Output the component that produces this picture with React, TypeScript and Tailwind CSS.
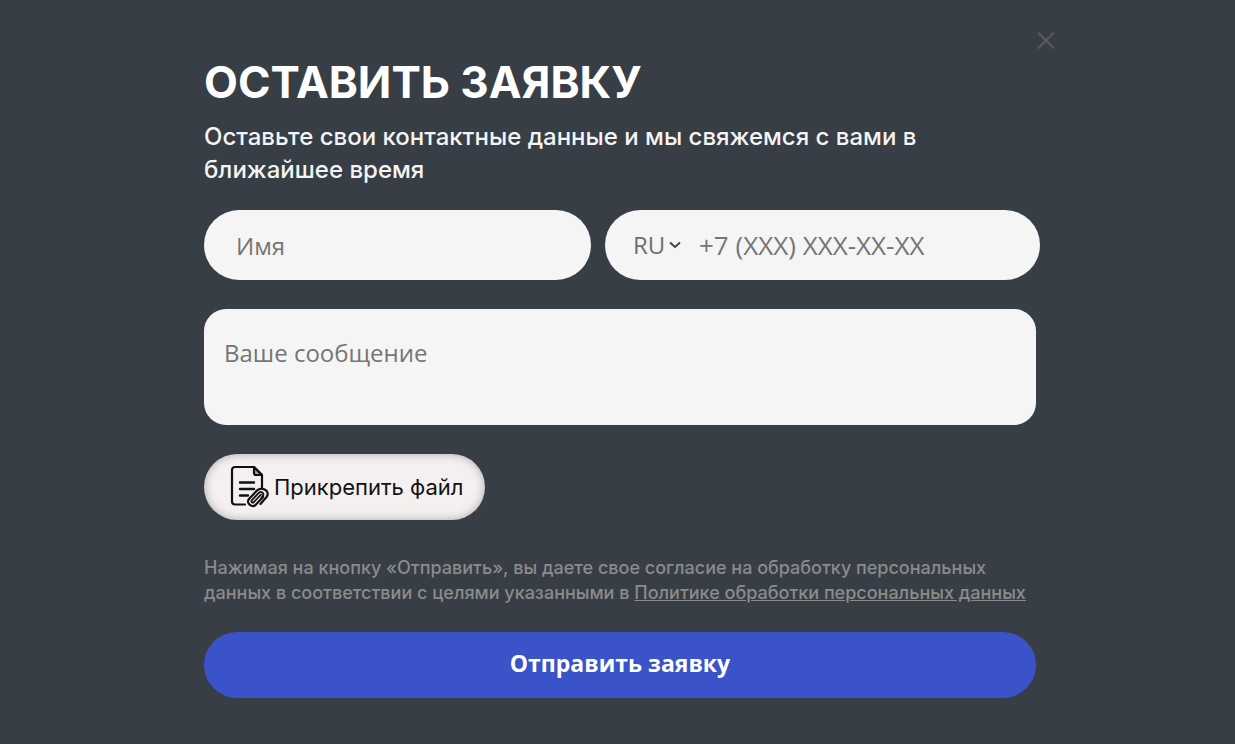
import React, { useRef, useState } from 'react';

const COUNTRIES = [
    { code: 'RU', mask: '+7 (XXX) XXX-XX-XX' },
    { code: 'BY', mask: '+375 (XX) XXX-XX-XX' },
    { code: 'KZ', mask: '+7 (XXX) XXX-XX-XX' },
];

const AttachFileIcon: React.FC = () => (
    <svg
        width="40"
        height="42"
        viewBox="0 0 40 42"
        fill="none"
        stroke="#111111"
        strokeWidth="2.2"
        strokeLinecap="round"
        strokeLinejoin="round"
        aria-hidden="true"
    >
        <path d="M15 38.500H5a3 3 0 0 1-3-3V4a3 3 0 0 1 3-3h19l8 8v14" />
        <path d="M24 1v6a2 2 0 0 0 2 2h6z" fill="#111111" fillOpacity="0.35" />
        <path d="M10 16.500h14M10 23h14M10 29.500h8" strokeWidth="2.4" />
        <path d="M33 31l-7 7.500c-3.500 4-10.500-1-7-5.500l8-8.500c4.500-4.500 14 .500 9.500 6.500l-6 7" />
        <path d="M31 28.500l-7 7.500c-1.500 1.500-3.500 0-2.200-1.700l7-7.500c2.300-2.200 5.700.200 4.200 2.900l-1.500 1.800" strokeWidth="1.8" />
    </svg>
);

const App: React.FC = () => {
    const [country, setCountry] = useState('RU');
    const fileRef = useRef<HTMLInputElement>(null);
    const mask = COUNTRIES.find((c) => c.code === country)?.mask;

    return (
        <main className="min-h-screen bg-[#383e46] px-4 pt-8 pb-11 font-['Inter',sans-serif]">
            <section role="dialog" aria-labelledby="form-title" className="mx-auto max-w-[875px]">
                <div className="flex h-5 justify-end">
                    <button type="button" aria-label="Закрыть" className="h-4 w-[18px] text-[#5b5a58]">
                        <svg width="18" height="17" viewBox="0 0 18 17" stroke="currentColor" strokeWidth="2" aria-hidden="true">
                            <path d="M1 0.500L17 16.500M17 0.500L1 16.500" />
                        </svg>
                    </button>
                </div>

                <form className="pr-[15px] pl-6" onSubmit={(e) => e.preventDefault()}>
                    <h1 id="form-title" className="text-[44px] leading-[60px] font-bold text-white">
                        ОСТАВИТЬ ЗАЯВКУ
                    </h1>
                    <p className="mt-2 text-[24px] leading-[33px] font-medium text-[#f4f4f4]">
                        Оставьте свои контактные данные и мы свяжемся с вами в<br />
                        ближайшее время
                    </p>

                    <div className="mt-6 grid grid-cols-[387fr_435fr] gap-[14px] font-['Open_Sans',sans-serif] text-[24px]">
                        <input
                            type="text"
                            name="name"
                            aria-label="Имя"
                            placeholder="Имя"
                            className="h-[70px] w-full min-w-0 rounded-full bg-[#f5f5f5] px-8 text-[#333333] outline-none placeholder:text-[#757575]"
                        />
                        <div className="flex h-[70px] min-w-0 items-center rounded-full bg-[#f5f5f5] px-7">
                            <div className="grid w-[56px] shrink-0 items-center">
                                <select
                                    aria-label="Страна"
                                    value={country}
                                    onChange={(e) => setCountry(e.target.value)}
                                    className="col-start-1 row-start-1 w-full appearance-none bg-transparent text-[#6e6e6e] outline-none"
                                >
                                    {COUNTRIES.map((c) => (
                                        <option key={c.code}>{c.code}</option>
                                    ))}
                                </select>
                                <svg
                                    width="12"
                                    height="8"
                                    viewBox="0 0 12 8"
                                    fill="none"
                                    stroke="#444444"
                                    strokeWidth="2"
                                    className="pointer-events-none col-start-1 row-start-1 mr-2 justify-self-end"
                                    aria-hidden="true"
                                >
                                    <path d="M1 1.500l5 4.500 5-4.500" />
                                </svg>
                            </div>
                            <input
                                type="tel"
                                name="phone"
                                aria-label="Телефон"
                                placeholder={mask}
                                className="ml-2.5 min-w-0 flex-1 bg-transparent text-[26px] text-[#333333] outline-none placeholder:text-[#757575]"
                            />
                        </div>
                    </div>

                    <div className="mr-1">
                        <textarea
                            name="message"
                            aria-label="Ваше сообщение"
                            placeholder="Ваше сообщение"
                            className="mt-[29px] block h-[116px] w-full resize-none rounded-[22px] bg-[#f5f5f5] px-5 py-7 font-['Open_Sans',sans-serif] text-[24px] leading-[32px] text-[#333333] outline-none placeholder:text-[#757575]"
                        />

                        <button
                            type="button"
                            onClick={() => fileRef.current?.click()}
                            className="mt-[29px] flex h-[66px] items-center gap-1 rounded-full bg-[#f4f0f0] pr-[22px] pl-[26px] text-[22px] text-[#111111] shadow-[inset_0_0_10px_rgba(0,0,0,0.3)]"
                        >
                            <AttachFileIcon />
                            Прикрепить файл
                        </button>
                        <input ref={fileRef} type="file" aria-label="Прикрепить файл" className="hidden" />

                        <p className="mt-[35px] text-[18px] leading-[25px] font-medium text-[#8b8b8b]">
                            Нажимая на кнопку «Отправить», вы даете свое согласие на обработку персональных<br />
                            данных в соответствии с целями указанными в{' '}
                            <a href="#policy" className="underline">
                                Политике обработки персональных данных
                            </a>
                        </p>

                        <button
                            type="submit"
                            className="mt-[27px] h-[66px] w-full rounded-full bg-[#3a53c9] pb-1 font-['Open_Sans',sans-serif] text-[23px] font-bold text-white"
                        >
                            Отправить заявку
                        </button>
                    </div>
                </form>
            </section>
        </main>
    );
};

export default App;
